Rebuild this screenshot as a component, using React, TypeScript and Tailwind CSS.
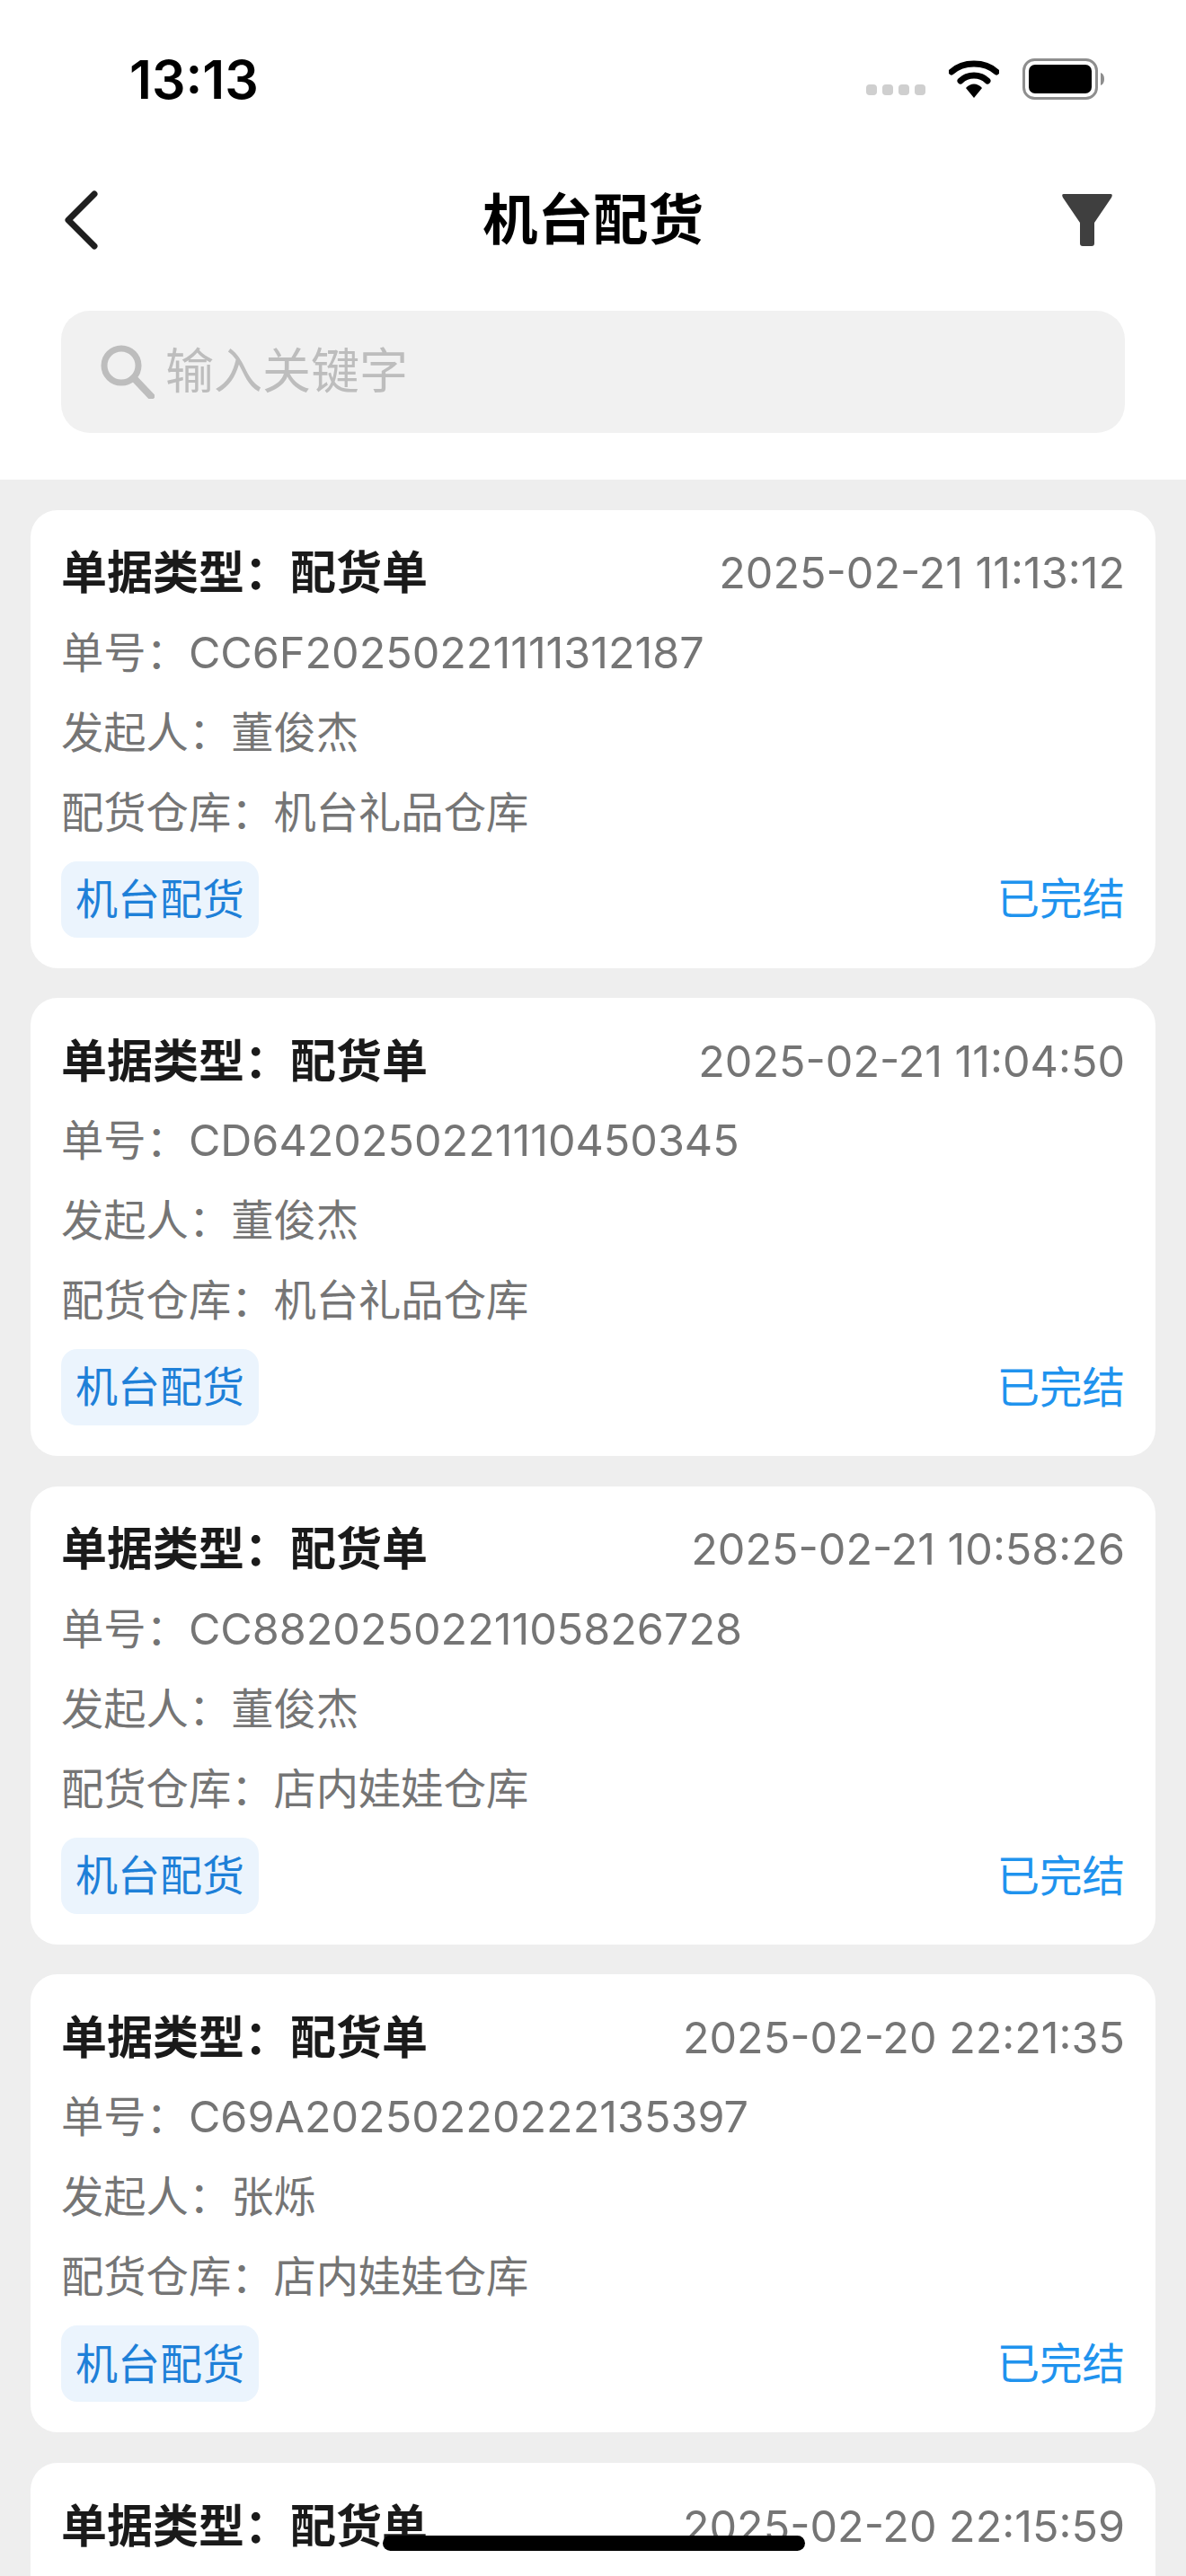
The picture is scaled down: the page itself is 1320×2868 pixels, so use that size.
import React from 'react';

type Order = {
  time: string;
  no?: string;
  sender?: string;
  store?: string;
};

const orders: Order[] = [
  { time: '2025-02-21 11:13:12', no: 'CC6F20250221111312187', sender: '董俊杰', store: '机台礼品仓库' },
  { time: '2025-02-21 11:04:50', no: 'CD6420250221110450345', sender: '董俊杰', store: '机台礼品仓库' },
  { time: '2025-02-21 10:58:26', no: 'CC8820250221105826728', sender: '董俊杰', store: '店内娃娃仓库' },
  { time: '2025-02-20 22:21:35', no: 'C69A20250220222135397', sender: '张烁', store: '店内娃娃仓库' },
  // only the top of this one is on screen
  { time: '2025-02-20 22:15:59' },
];

const OrderCard: React.FC<{ order: Order }> = ({ order }) => (
  <div className="bg-white rounded-[30px] px-[34px] pt-[26px] pb-[32px] min-h-[510px]">
    <div className="flex justify-between items-center h-[90px]">
      <span className="text-[51px] font-bold text-[#1a1a1a] whitespace-nowrap">单据类型：配货单</span>
      <span className="text-[48.5px] text-[#757575] whitespace-nowrap">{order.time}</span>
    </div>
    {order.no && (
      <>
        <div className="text-[47.3px] text-[#757575] leading-[89px] -mt-[2px]">
          单号：<span className="text-[48.5px]">{order.no}</span>
        </div>
        <div className="text-[47.3px] text-[#757575] leading-[89px]">发起人：{order.sender}</div>
        <div className="text-[47.3px] text-[#757575] leading-[89px]">配货仓库：{order.store}</div>
        <div className="flex justify-between items-center mt-[10px]">
          <span className="bg-[#ebf4fd] text-[#1e80d8] text-[47px] rounded-[18px] h-[85px] w-[220px] flex items-center justify-center">
            机台配货
          </span>
          <span className="text-[#1f93ee] text-[47.5px]">已完结</span>
        </div>
      </>
    )}
  </div>
);

export default function App() {
  return (
    <div
      className="relative w-[1320px] h-[2868px] overflow-hidden bg-[#eeeeee]"
      style={{ fontFamily: 'Inter, "Noto Sans CJK SC", sans-serif' }}
    >
      {/* Header */}
      <div className="bg-white h-[534px] flex flex-col">
        <div className="h-[170px] flex items-center justify-between pl-[144px] pr-[90px] pt-[6px]">
          <span className="text-[59px] font-semibold text-black leading-none">13:13</span>
          <div className="flex items-center">
            <svg width="66" height="12" viewBox="0 0 66 12" className="mt-[24px] mr-[26px]">
              <rect x="0" y="0" width="12" height="12" rx="4" fill="#cfcfcf" />
              <rect x="18" y="0" width="12" height="12" rx="4" fill="#cfcfcf" />
              <rect x="36" y="0" width="12" height="12" rx="4" fill="#cfcfcf" />
              <rect x="54" y="0" width="12" height="12" rx="4" fill="#cfcfcf" />
            </svg>
            <svg width="56" height="42" viewBox="0 0 56 42" className="mr-[26px]">
              <path d="M3 13 C16 1 40 1 53 13" fill="none" stroke="#000" strokeWidth="7" strokeLinecap="round" />
              <path d="M13 23 C21 15 35 15 43 23" fill="none" stroke="#000" strokeWidth="7" strokeLinecap="round" />
              <path d="M19 31 C24 25 32 25 37 31 L28 42 Z" fill="#000" />
            </svg>
            <svg width="92" height="46" viewBox="0 0 92 46">
              <rect x="1.5" y="1.5" width="81" height="43" rx="12" fill="none" stroke="#8e8e8e" strokeWidth="3" />
              <rect x="7" y="7" width="70" height="32" rx="7" fill="#000" />
              <path d="M87 16 C90 17 91 20 91 23 C91 26 90 29 87 30 Z" fill="#8e8e8e" />
            </svg>
          </div>
        </div>
        <div className="h-[150px] flex items-center pl-[70px] pr-[82px]">
          <div className="flex-1">
            <svg width="40" height="68" viewBox="0 0 40 68" fill="none">
              <path d="M35 5 L6 34 L35 63" stroke="#1f1f1f" strokeWidth="7" strokeLinecap="round" strokeLinejoin="round" />
            </svg>
          </div>
          <span className="ml-[12px] text-[61.5px] font-bold text-black leading-none">机台配货</span>
          <div className="flex-1 flex justify-end">
            <svg width="56" height="58" viewBox="0 0 56 58">
              <path d="M2 0 H54 Q57 0 55 4 L36 32 V55 Q36 58 33 58 H23 Q20 58 20 55 V32 L1 4 Q-1 0 2 0 Z" fill="#3f3f3f" />
            </svg>
          </div>
        </div>
        <div className="mx-[68px] mt-[26px] h-[136px] rounded-[32px] bg-[#f1f1f1] flex items-center pl-11">
          <svg width="60" height="60" viewBox="0 0 60 60" fill="none" className="mr-3">
            <circle cx="23" cy="23" r="19" stroke="#bdbdbd" strokeWidth="7" />
            <path d="M37 37 L56 57" stroke="#bdbdbd" strokeWidth="8" strokeLinecap="square" />
          </svg>
          <span className="text-[54px] text-[#bdbdbd] leading-none">输入关键字</span>
        </div>
      </div>

      {/* List */}
      <div className="flex flex-col gap-[33.6px] px-[34px] pt-[33.5px]">
        {orders.map((order) => (
          <OrderCard key={order.time} order={order} />
        ))}
      </div>

      {/* Home indicator */}
      <div className="absolute left-[426px] top-[2823px] w-[470px] h-[17px] rounded-full bg-black" />
    </div>
  );
}
